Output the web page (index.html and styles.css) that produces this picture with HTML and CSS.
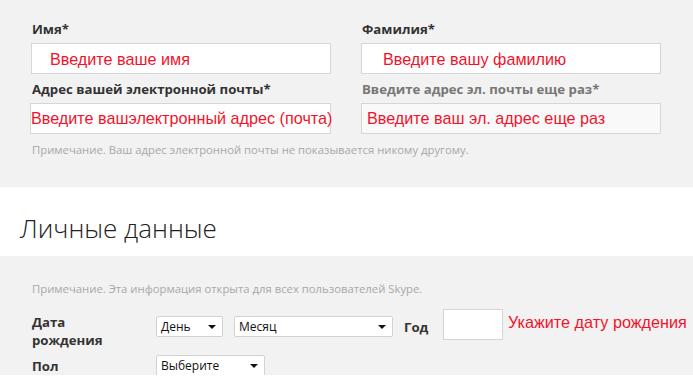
FILE: index.html
```html
<!DOCTYPE html>
<html lang="ru">
<head>
<meta charset="utf-8">
<link rel="stylesheet" href="styles.css">
</head>
<body>
<section class="panel panel-account">
  <div class="grid">
    <div class="field">
      <div class="label">Имя*</div>
      <div class="input input-first"><span class="hint">Введите ваше имя</span></div>
    </div>
    <div class="field">
      <div class="label">Фамилия*</div>
      <div class="input input-last"><span class="hint">Введите вашу фамилию</span></div>
    </div>
    <div class="field">
      <div class="label">Адрес вашей электронной почты*</div>
      <div class="input input-email"><span class="hint">Введите вашэлектронный адрес (почта)</span></div>
    </div>
    <div class="field">
      <div class="label label-muted">Введите адрес эл. почты еще раз*</div>
      <div class="input input-disabled input-email2"><span class="hint">Введите ваш эл. адрес еще раз</span></div>
    </div>
  </div>
  <p class="note note-email">Примечание. Ваш адрес электронной почты не показывается никому другому.</p>
</section>

<h2 class="section-title">Личные данные</h2>

<section class="panel panel-personal">
  <p class="note">Примечание. Эта информация открыта для всех пользователей Skype.</p>
  <div class="row row-dob">
    <div class="row-label">Дата<br>рождения</div>
    <div class="controls">
      <div class="select select-day"><span>День</span><svg class="caret" width="8" height="4" viewBox="0 0 8 4"><path d="M0 0H8L4 4Z" fill="#111"/></svg></div>
      <div class="select select-month"><span>Месяц</span><svg class="caret" width="8" height="4" viewBox="0 0 8 4"><path d="M0 0H8L4 4Z" fill="#111"/></svg></div>
      <div class="year-label">Год</div>
      <div class="input input-year"></div>
      <span class="hint hint-dob">Укажите дату рождения</span>
    </div>
  </div>
  <div class="row row-gender">
    <div class="row-label">Пол</div>
    <div class="controls">
      <div class="select select-gender"><span>Выберите</span><svg class="caret" width="8" height="4" viewBox="0 0 8 4"><path d="M0 0H8L4 4Z" fill="#111"/></svg></div>
    </div>
  </div>
</section>
</body>
</html>
```

FILE: styles.css
```css
* { box-sizing: border-box; }
html, body { margin: 0; padding: 0; background: #fff; }
body {
  font-family: "Open Sans", "Noto Sans", "DejaVu Sans", sans-serif;
  color: #333;
  width: 693px;
  height: 378px;
  overflow: hidden;
}
.panel { background: #f2f2f2; }
.panel-account {
  height: 187px;
  padding: 20px 0 0 31px;
}
.grid {
  display: grid;
  grid-template-columns: 300px 300px;
  column-gap: 30px;
  row-gap: 6px;
}
.label {
  font-size: 13.2px;
  line-height: 18px;
  font-weight: 700;
  color: #333;
  padding-left: 1px;
  margin-bottom: 5px;
  white-space: nowrap;
}
.label-muted { color: #777; }
.input {
  height: 31px;
  background: #fff;
  border: 1px solid #d6d6d6;
  display: flex;
  align-items: flex-end;
  white-space: nowrap;
}
.input-disabled { background: #f9f9f9; }
.hint {
  font-family: "Liberation Sans", "DejaVu Sans", sans-serif;
  font-size: 16.2px;
  line-height: 19px;
  color: #f2132b;
  white-space: nowrap;
}
.input-first { padding: 0 0 4px 18px; }
.input-last { padding: 0 0 4px 21px; }
.input-email { padding: 0 0 5px 0; margin-left: -1px; }
.input-email2 { padding: 0 0 5px 5px; }
.note {
  margin: 0;
  font-size: 11.3px;
  line-height: 16px;
  color: #a8a8a8;
  white-space: nowrap;
}
.note-email { margin-top: 8px; padding-left: 1px; }
.section-title {
  margin: 0;
  height: 69px;
  padding: 24px 0 0 20px;
  font-size: 26px;
  line-height: 34px;
  font-weight: 300;
  color: #222;
}
.panel-personal {
  height: 119px;
  overflow: hidden;
  padding: 25px 0 0 32px;
}
.row { display: flex; align-items: flex-start; }
.row-dob { margin-top: 12px; }
.row-gender { margin-top: 6px; }
.row-label {
  width: 124px;
  font-size: 13.2px;
  line-height: 18px;
  font-weight: 700;
  color: #333;
}
.row-dob .row-label { padding-top: 4px; }
.row-gender .row-label { padding-top: 2px; }
.controls { display: flex; align-items: flex-start; }
.select {
  height: 21px;
  background: #fff;
  border: 1px solid #d2d2d2;
  border-radius: 2px;
  display: flex;
  align-items: center;
  justify-content: space-between;
  padding: 0 6px 0 4px;
  font-size: 12px;
  color: #111;
}
.row-dob .select { margin-top: 7px; }
.caret { display: block; }
.select-day { width: 67px; margin-right: 11px; }
.select-month { width: 159px; margin-right: 11px; }
.select-gender { width: 109px; }
.year-label {
  margin-top: 9px;
  width: 39px;
  font-size: 13.2px;
  line-height: 18px;
  font-weight: 700;
}
.input-year { width: 60px; height: 31px; }
.hint-dob { margin: 4px 0 0 5px; }
```
